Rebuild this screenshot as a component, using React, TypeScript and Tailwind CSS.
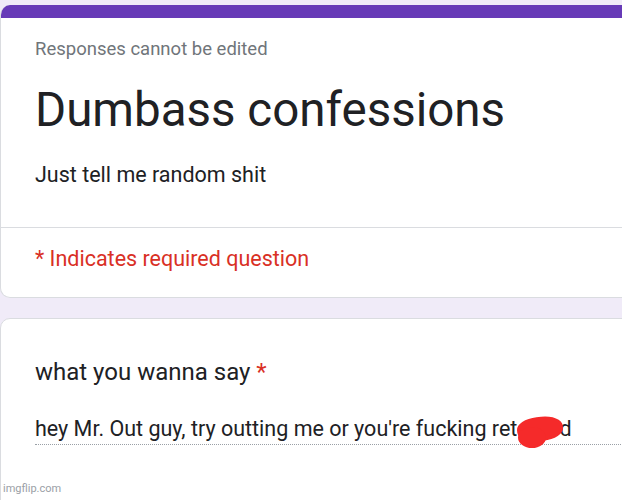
export default function App() {
  return (
    <div
      className="relative w-[622px] h-[500px] overflow-hidden bg-[#f0ebf8] pt-[5px]"
      style={{ fontFamily: 'Roboto, "Noto Sans", Arial, sans-serif' }}
    >
      {/* Header card */}
      <div className="w-[660px] rounded-[10px] overflow-hidden bg-white border border-[#dadce0] border-t-0">
        <div className="h-[13px] bg-[#673ab7]" />
        <div className="px-[34px] pt-[19px] pb-[38px]">
          <p className="text-[18.5px] leading-[24px] text-[#70757a]">Responses cannot be edited</p>
          <h1 className="mt-[21px] text-[47.5px] leading-[56px] text-[#202124]">Dumbass confessions</h1>
          <p className="mt-[23px] text-[21.5px] leading-[28px] text-[#202124]">Just tell me random shit</p>
        </div>
        <div className="border-t border-[#dadce0] px-[34px] pt-[17px] pb-[24px]">
          <p className="text-[21.5px] leading-[28px] text-[#d93025]">* Indicates required question</p>
        </div>
      </div>

      {/* Question card */}
      <div className="mt-[20px] w-[660px] h-[200px] rounded-[10px] bg-white border border-[#dadce0] px-[34px] pt-[37px]">
        <p className="text-[24px] leading-[32px] text-[#202124]">
          what you wanna say <span className="text-[#d93025]">*</span>
        </p>
        <div className="relative mt-[27px] border-b border-dotted border-[#9aa0a6] pb-[1px]">
          <span className="text-[21.5px] leading-[28px] text-[#202124]">
            hey Mr. Out guy, try outting me or you're fucking retarded
          </span>
          {/* scribble over part of the word */}
          <div className="absolute left-[482px] top-[2px] w-[46px] h-[24px] rounded-[45%] bg-[#f52a2a] -rotate-6" />
          <div className="absolute left-[483px] top-[12px] w-[28px] h-[21px] rounded-[50%] bg-[#f52a2a]" />
        </div>
      </div>

      <span className="absolute left-[3px] bottom-[3px] text-[11px] text-[#9aa0a6]">imgflip.com</span>
    </div>
  );
}
